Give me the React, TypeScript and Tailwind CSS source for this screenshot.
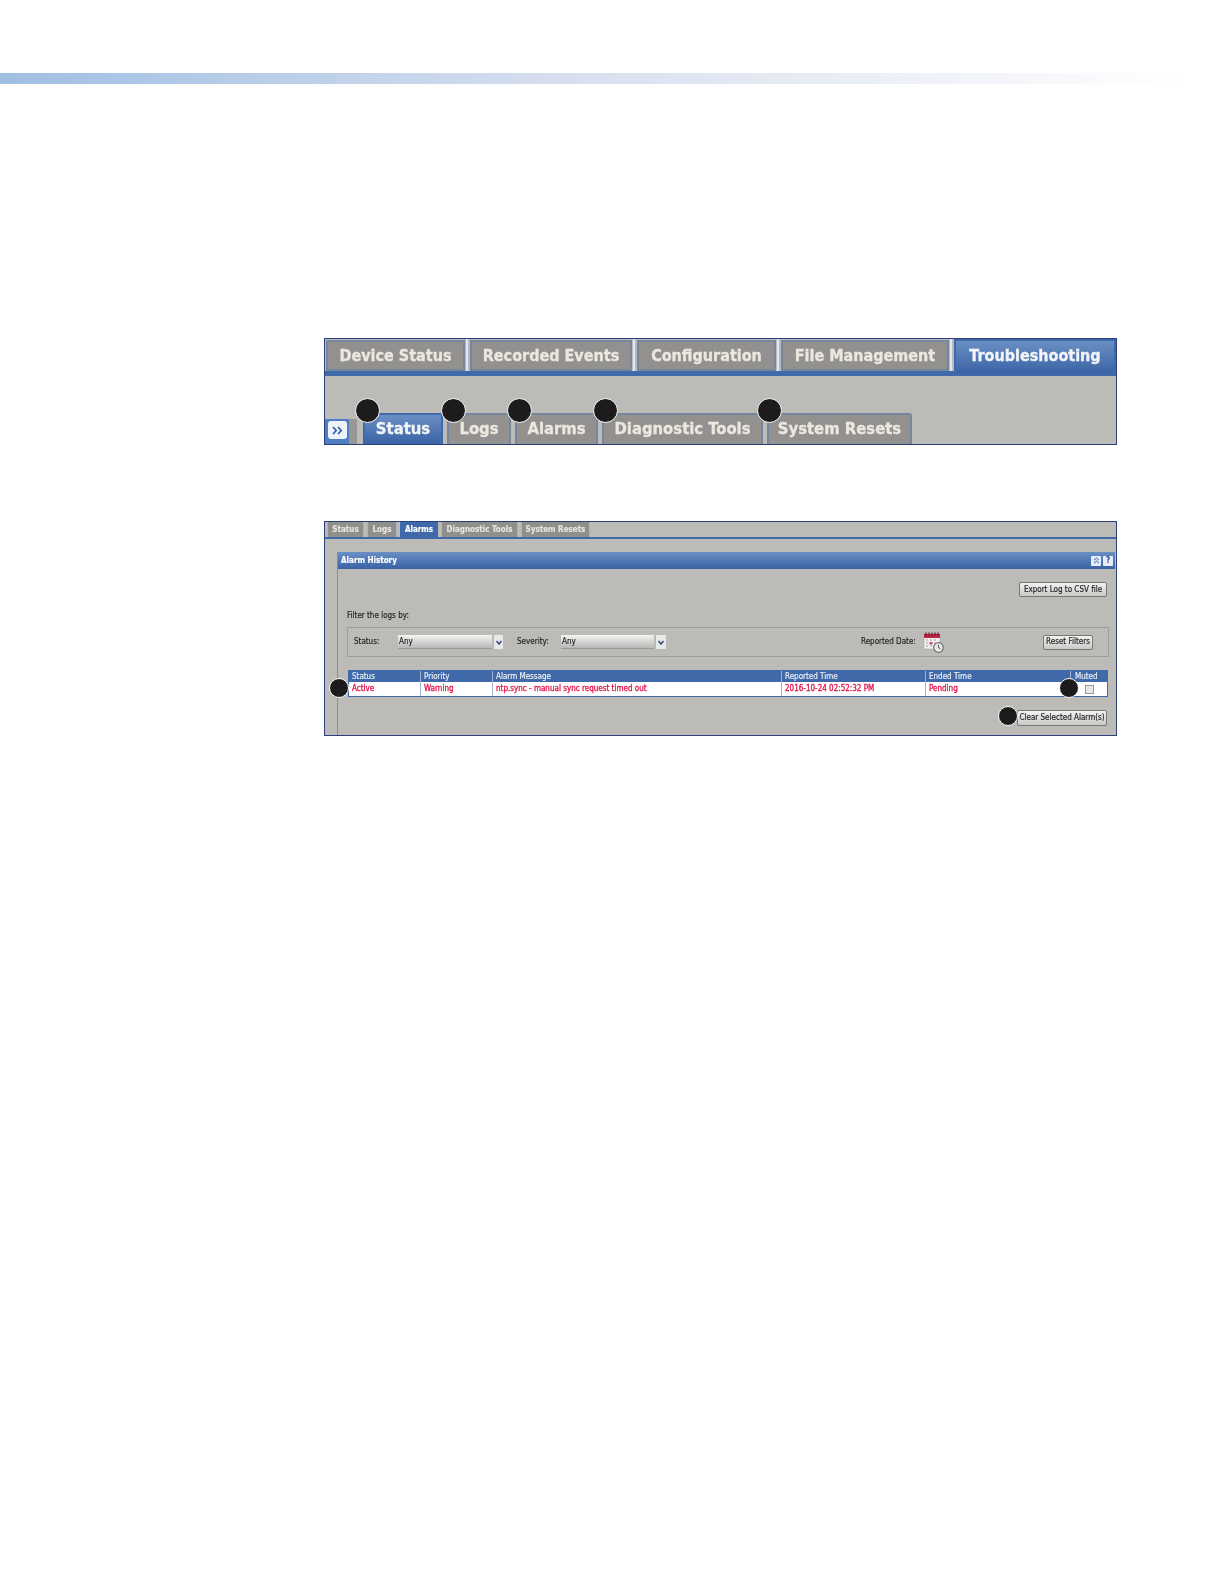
const tabFont = "font-['DejaVu_Sans_Condensed','DejaVu_Sans',sans-serif] font-bold [font-stretch:condensed] whitespace-nowrap [-webkit-text-stroke:0.3px_currentColor]";
const smallFont = "font-['DejaVu_Sans_Condensed','DejaVu_Sans',sans-serif] [font-stretch:condensed] whitespace-nowrap [-webkit-text-stroke:0.15px_currentColor]";
const activeTab = 'border-[#3f69a8] bg-gradient-to-b from-[#6a8fc4] to-[#3a63a6] text-[#f2f4f8]';
const idleTab = 'border-[#74879f] bg-[#929190] text-[#ebe8df]';

function Callout({ className }: { className: string }) {
  return <span className={`absolute rounded-full border border-white bg-[#1d1b1c] ${className}`} />;
}

function TopTab({ label, width, active }: { label: string; width: string; active?: boolean }) {
  return (
    <div
      className={`flex items-center justify-center border-2 text-[16px] ${tabFont} ${width} ${
        active ? `-mt-[1px] h-[37px] pb-[3px] ${activeTab}` : `h-[31px] ${idleTab}`
      }`}
    >
      {label}
    </div>
  );
}

function TabDivider() {
  return <div className="-mt-[1px] ml-[1px] mr-[2px] h-[32px] w-[2px] bg-[#dfe6ef]" />;
}

function SubTab({ label, width, active }: { label: string; width: string; active?: boolean }) {
  return (
    <div
      className={`flex h-[31px] items-center justify-center rounded-t-[3px] border-x-2 border-t-2 text-[16.5px] ${tabFont} ${width} ${
        active ? activeTab : idleTab
      }`}
    >
      {label}
    </div>
  );
}

function MiniTab({ label, width, active }: { label: string; width: string; active?: boolean }) {
  return (
    <div
      className={`flex h-[15px] items-center justify-center border-x text-[8px] font-bold ${width} ${
        active ? 'border-[#3f69a8] bg-[#3f69a8] text-white' : 'border-[#a9b4c4] bg-[#8f8f8c] text-[#e6e4dc]'
      }`}
    >
      {label}
    </div>
  );
}

function SelectBox({ width, arrow }: { width: string; arrow: string }) {
  return (
    <div className="flex h-[14px] items-center gap-[2px]">
      <div className={`flex h-[14px] items-center border-b border-[#999] bg-gradient-to-b from-[#f4f4f2] to-[#b8b8b6] pl-[1px] pt-[1px] text-[8px] text-[#222] ${width}`}>
        Any
      </div>
      <div className={`flex h-[14px] items-center justify-center bg-[#e8e8e8] ${arrow}`}>
        <svg width="6" height="5" viewBox="0 0 6 5">
          <path d="M0.5 1 L3 4 L5.5 1" fill="none" stroke="#27407a" strokeWidth="1.4" />
        </svg>
      </div>
    </div>
  );
}

function Button({ label, className }: { label: string; className: string }) {
  return (
    <div className={`flex items-center justify-center rounded-[2px] border border-[#777] bg-gradient-to-b from-[#f2f2f0] to-[#c9c9c7] text-[8px] text-[#222] ${className}`}>
      {label}
    </div>
  );
}

function Cell({ label, width, head }: { label: string; width: string; head?: boolean }) {
  return (
    <div
      className={`flex items-center border-r border-[#9fb2cf] pl-[3px] text-[8px] ${width} ${
        head ? 'h-[11px] pt-[1px] text-[#eef1f6]' : 'h-[14px] text-[#e3154a] [-webkit-text-stroke:0.3px_#e3154a]'
      }`}
    >
      {label}
    </div>
  );
}

function CalendarIcon() {
  return (
    <svg width="21" height="22" viewBox="0 0 21 22">
      <rect x="1" y="3" width="16" height="15" fill="#f1f1ef" stroke="#a9a9a9" strokeWidth="0.6" />
      <rect x="1" y="3" width="16" height="4" fill="#b5283f" />
      <path d="M3 1.5v3M6 1.5v3M9 1.5v3M12 1.5v3M15 1.5v3" stroke="#7a1a2c" strokeWidth="1.2" />
      <path d="M3 9h2M7 9h2M11 9h2M3 12h2M11 12h2M3 15h2M7 15h2" stroke="#b9b9c4" strokeWidth="1.4" />
      <rect x="6.5" y="11" width="3" height="2.4" fill="#d8456a" />
      <circle cx="15.5" cy="16.5" r="4.8" fill="#e9e9e7" stroke="#6f6f6f" strokeWidth="1.2" />
      <path d="M15.5 13.8v2.9l2 1" fill="none" stroke="#444" strokeWidth="0.9" />
    </svg>
  );
}

export default function App() {
  return (
    <div className="relative h-[1584px] w-[1224px] overflow-hidden bg-white">
      <div className="mt-[73px] h-[11px] w-[1180px] bg-gradient-to-r from-[#9fbfe3] via-[#d9e0ef] via-50% to-[#ffffff]" />

      <div className="relative ml-[324px] mt-[254px] flex h-[107px] w-[793px] flex-col border border-[#2b3f7c] bg-[#bcbbb8] blur-[0.4px]">
        <div className="flex h-[37px] items-start border-b-[5px] border-[#3f69a8] pl-[1px] pt-[1px]">
          <TopTab label="Device Status" width="w-[139px]" />
          <TabDivider />
          <TopTab label="Recorded Events" width="w-[162px]" />
          <TabDivider />
          <TopTab label="Configuration" width="w-[139px]" />
          <TabDivider />
          <TopTab label="File Management" width="w-[168px]" />
          <TabDivider />
          <TopTab label="Troubleshooting" width="w-[162px]" active />
        </div>
        <div className="mt-auto flex items-end">
          <div className="flex h-[25px] w-[24px] items-center justify-end bg-[#4f7dc0] pb-[3px] pr-[2px]">
            <span className="flex h-[18px] w-[19px] items-center justify-center rounded-[3px] bg-[#eef3fb]">
              <svg width="11" height="9" viewBox="0 0 11 9">
                <path d="M1 1l3.2 3.5L1 8M6 1l3.2 3.5L6 8" fill="none" stroke="#2f5ca6" strokeWidth="1.7" />
              </svg>
            </span>
          </div>
          <div className="h-[25px] w-[8px] bg-[#979795]" />
          <div className="ml-[6px] flex gap-[4px]">
            <SubTab label="Status" width="w-[80px]" active />
            <SubTab label="Logs" width="w-[64px]" />
            <SubTab label="Alarms" width="w-[83px]" />
            <SubTab label="Diagnostic Tools" width="w-[161px]" />
            <SubTab label="System Resets" width="w-[145px]" />
          </div>
        </div>
        <Callout className="left-[30px] top-[59px] h-[25px] w-[25px]" />
        <Callout className="left-[116px] top-[59px] h-[25px] w-[25px]" />
        <Callout className="left-[182px] top-[59px] h-[25px] w-[25px]" />
        <Callout className="left-[268px] top-[59px] h-[25px] w-[25px]" />
        <Callout className="left-[432px] top-[59px] h-[25px] w-[25px]" />
      </div>

      <div className={`relative ml-[324px] mt-[76px] h-[215px] w-[793px] border border-[#2b3f7c] bg-[#bcbbb8] blur-[0.3px] ${smallFont}`}>
        <div className="flex h-[17px] gap-[3px] border-b-2 border-[#3f69a8] pl-[2px]">
          <MiniTab label="Status" width="w-[37px]" />
          <MiniTab label="Logs" width="w-[30px]" />
          <MiniTab label="Alarms" width="w-[38px]" active />
          <MiniTab label="Diagnostic Tools" width="w-[77px]" />
          <MiniTab label="System Resets" width="w-[69px]" />
        </div>
        <div className="ml-[12px] mr-[1px] mt-[13px] flex h-[183px] flex-col border-l border-[#8c8c8a]">
          <div className="flex h-[17px] items-center justify-between bg-gradient-to-b from-[#6a8fc4] to-[#3a63a6] pl-[3px] pr-[2px] text-[8px] font-bold text-white">
            Alarm History
            <div className="flex gap-[2px]">
              <span className="flex h-[10px] w-[10px] items-center justify-center rounded-[1px] bg-[#e8eef8]">
                <svg width="7" height="7" viewBox="0 0 7 7">
                  <path d="M1 3.2l2.5-2.2L6 3.2M1 6.2l2.5-2.2L6 6.2" fill="none" stroke="#2f5ca6" strokeWidth="1" />
                </svg>
              </span>
              <span className="flex h-[10px] w-[10px] items-center justify-center rounded-[1px] bg-[#e8eef8] text-[8px] leading-none text-[#2f5ca6]">?</span>
            </div>
          </div>
          <div className="mr-[8px] mt-[13px] flex justify-end">
            <Button label="Export Log to CSV file" className="h-[15px] w-[88px]" />
          </div>
          <div className="ml-[9px] mt-[13px] text-[8px] leading-[11px] text-[#222]">Filter the logs by:</div>
          <div className="ml-[9px] mr-[6px] mt-[6px] flex h-[30px] items-center border border-[#9d9d9b] text-[8px] text-[#222]">
            <span className="ml-[6px] w-[44px]">Status:</span>
            <SelectBox width="w-[94px]" arrow="w-[9px]" />
            <span className="ml-[14px] w-[44px]">Severity:</span>
            <SelectBox width="w-[93px]" arrow="w-[10px]" />
            <span className="ml-[195px] w-[52px]">Reported Date:</span>
            <span className="ml-[10px] flex">
              <CalendarIcon />
            </span>
            <span className="ml-[99px]">
              <Button label="Reset Filters" className="h-[15px] w-[50px]" />
            </span>
          </div>
          <div className="ml-[10px] mr-[7px] mt-[13px] border border-[#3f69a8]">
            <div className="flex bg-[#3f69a8]">
              <Cell head label="Status" width="w-[72px]" />
              <Cell head label="Priority" width="w-[72px]" />
              <Cell head label="Alarm Message" width="w-[289px]" />
              <Cell head label="Reported Time" width="w-[144px]" />
              <Cell head label="Ended Time" width="w-[145px]" />
              <div className="flex h-[11px] items-center pl-[4px] pt-[1px] text-[8px] text-[#eef1f6]">Muted</div>
            </div>
            <div className="flex bg-white">
              <Cell label="Active" width="w-[72px]" />
              <Cell label="Warning" width="w-[72px]" />
              <Cell label="ntp.sync - manual sync request timed out" width="w-[289px]" />
              <Cell label="2016-10-24 02:52:32 PM" width="w-[144px]" />
              <Cell label="Pending" width="w-[145px]" />
              <div className="flex h-[14px] items-center pl-[14px]">
                <span className="h-[9px] w-[9px] border border-[#9a9a9a] bg-[#e8e8e8]" />
              </div>
            </div>
          </div>
          <div className="mr-[8px] mt-[13px] flex justify-end">
            <Button label="Clear Selected Alarm(s)" className="h-[16px] w-[90px]" />
          </div>
        </div>
        <Callout className="left-[4px] top-[156px] h-[20px] w-[20px]" />
        <Callout className="left-[734px] top-[156px] h-[20px] w-[20px]" />
        <Callout className="left-[673px] top-[184px] h-[20px] w-[20px]" />
      </div>
    </div>
  );
}
